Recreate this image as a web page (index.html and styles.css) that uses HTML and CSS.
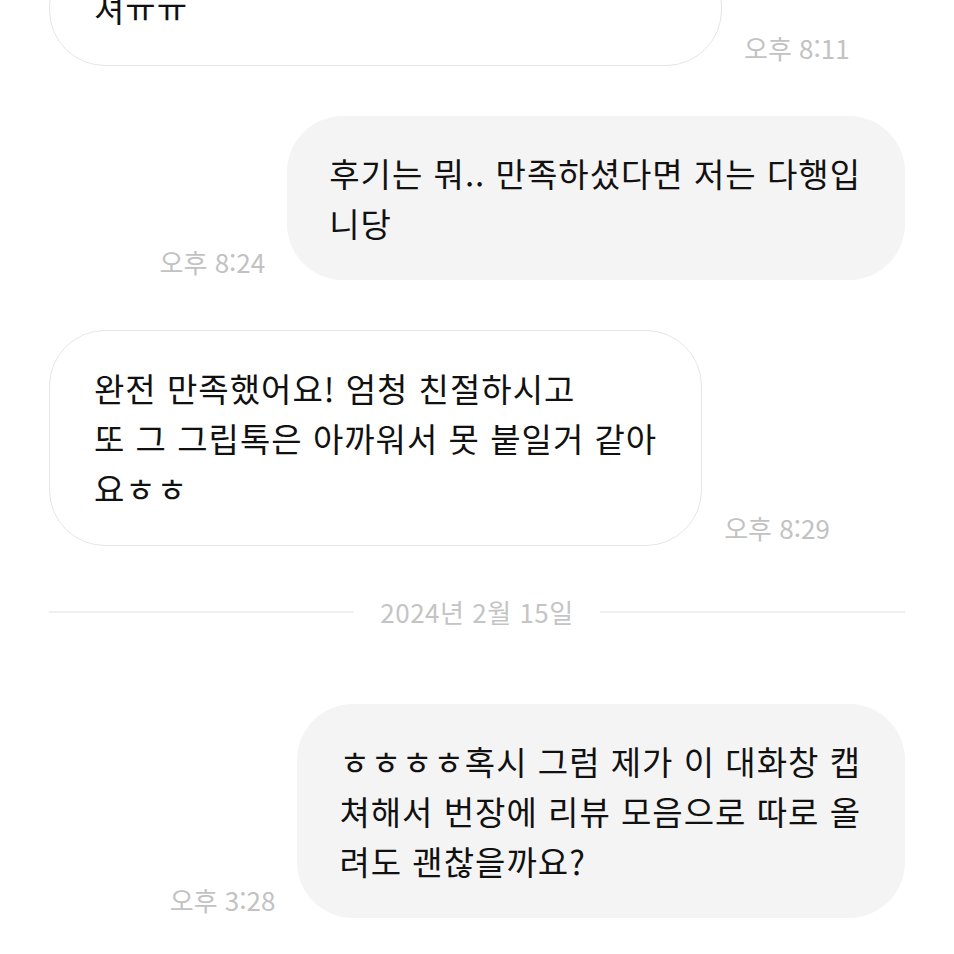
FILE: index.html
```html
<!DOCTYPE html>
<html lang="ko">
<head>
<meta charset="utf-8">
<link rel="stylesheet" href="styles.css">
</head>
<body>
<div class="chat">
  <div class="row in top">
    <div class="bubble in wide"><span class="line">셔ㅠㅠ</span></div>
    <span class="time">오후 8:11</span>
  </div>
  <div class="row out">
    <span class="time">오후 8:24</span>
    <div class="bubble out"><span class="line">후기는 뭐.. 만족하셨다면 저는 다행입</span><span class="line">니당</span></div>
  </div>
  <div class="row in">
    <div class="bubble in"><span class="line">완전 만족했어요! 엄청 친절하시고</span><span class="line">또 그 그립톡은 아까워서 못 붙일거 같아</span><span class="line">요ㅎㅎ</span></div>
    <span class="time">오후 8:29</span>
  </div>
  <div class="date-sep">
    <span class="rule"></span>
    <span class="date">2024년 2월 15일</span>
    <span class="rule"></span>
  </div>
  <div class="row out">
    <span class="time">오후 3:28</span>
    <div class="bubble out"><span class="line">ㅎㅎㅎㅎ혹시 그럼 제가 이 대화창 캡</span><span class="line">쳐해서 번장에 리뷰 모음으로 따로 올</span><span class="line">려도 괜찮을까요?</span></div>
  </div>
</div>
</body>
</html>
```

FILE: styles.css
```css
html, body {
  margin: 0;
  padding: 0;
  background: #ffffff;
}

body {
  font-family: "Noto Sans CJK KR", "Noto Sans", sans-serif;
  color: #111111;
  overflow: hidden;
  height: 954px;
}

.chat {
  display: flex;
  flex-direction: column;
  padding: 0 49px;
  margin-top: -50px;
}

.row {
  display: flex;
  align-items: flex-end;
  gap: 22px;
  margin-bottom: 50px;
}

.row.out {
  justify-content: flex-end;
}

.bubble {
  display: flex;
  flex-direction: column;
  padding: 32px 44px;
  border-radius: 56px;
  font-size: 33px;
  line-height: 50px;
  letter-spacing: 1px;
  box-sizing: border-box;
}

.bubble.in {
  background: #ffffff;
  border: 1.5px solid #e6e6e6;
}

.bubble.wide {
  width: 673px;
}

.bubble.out {
  background: #f4f4f4;
  padding-left: 42px;
}

.line {
  white-space: nowrap;
}

.time {
  font-size: 26px;
  color: #c2c2c2;
  line-height: 30px;
  margin-bottom: 3px;
  white-space: nowrap;
}

.date-sep {
  display: flex;
  align-items: center;
  gap: 26px;
  margin-top: 1px;
  margin-bottom: 77px;
}

.rule {
  flex: 1;
  height: 2px;
  background: #efefef;
}

.date {
  font-size: 26px;
  color: #c4c4c4;
  line-height: 30px;
  letter-spacing: 0.5px;
}
```
